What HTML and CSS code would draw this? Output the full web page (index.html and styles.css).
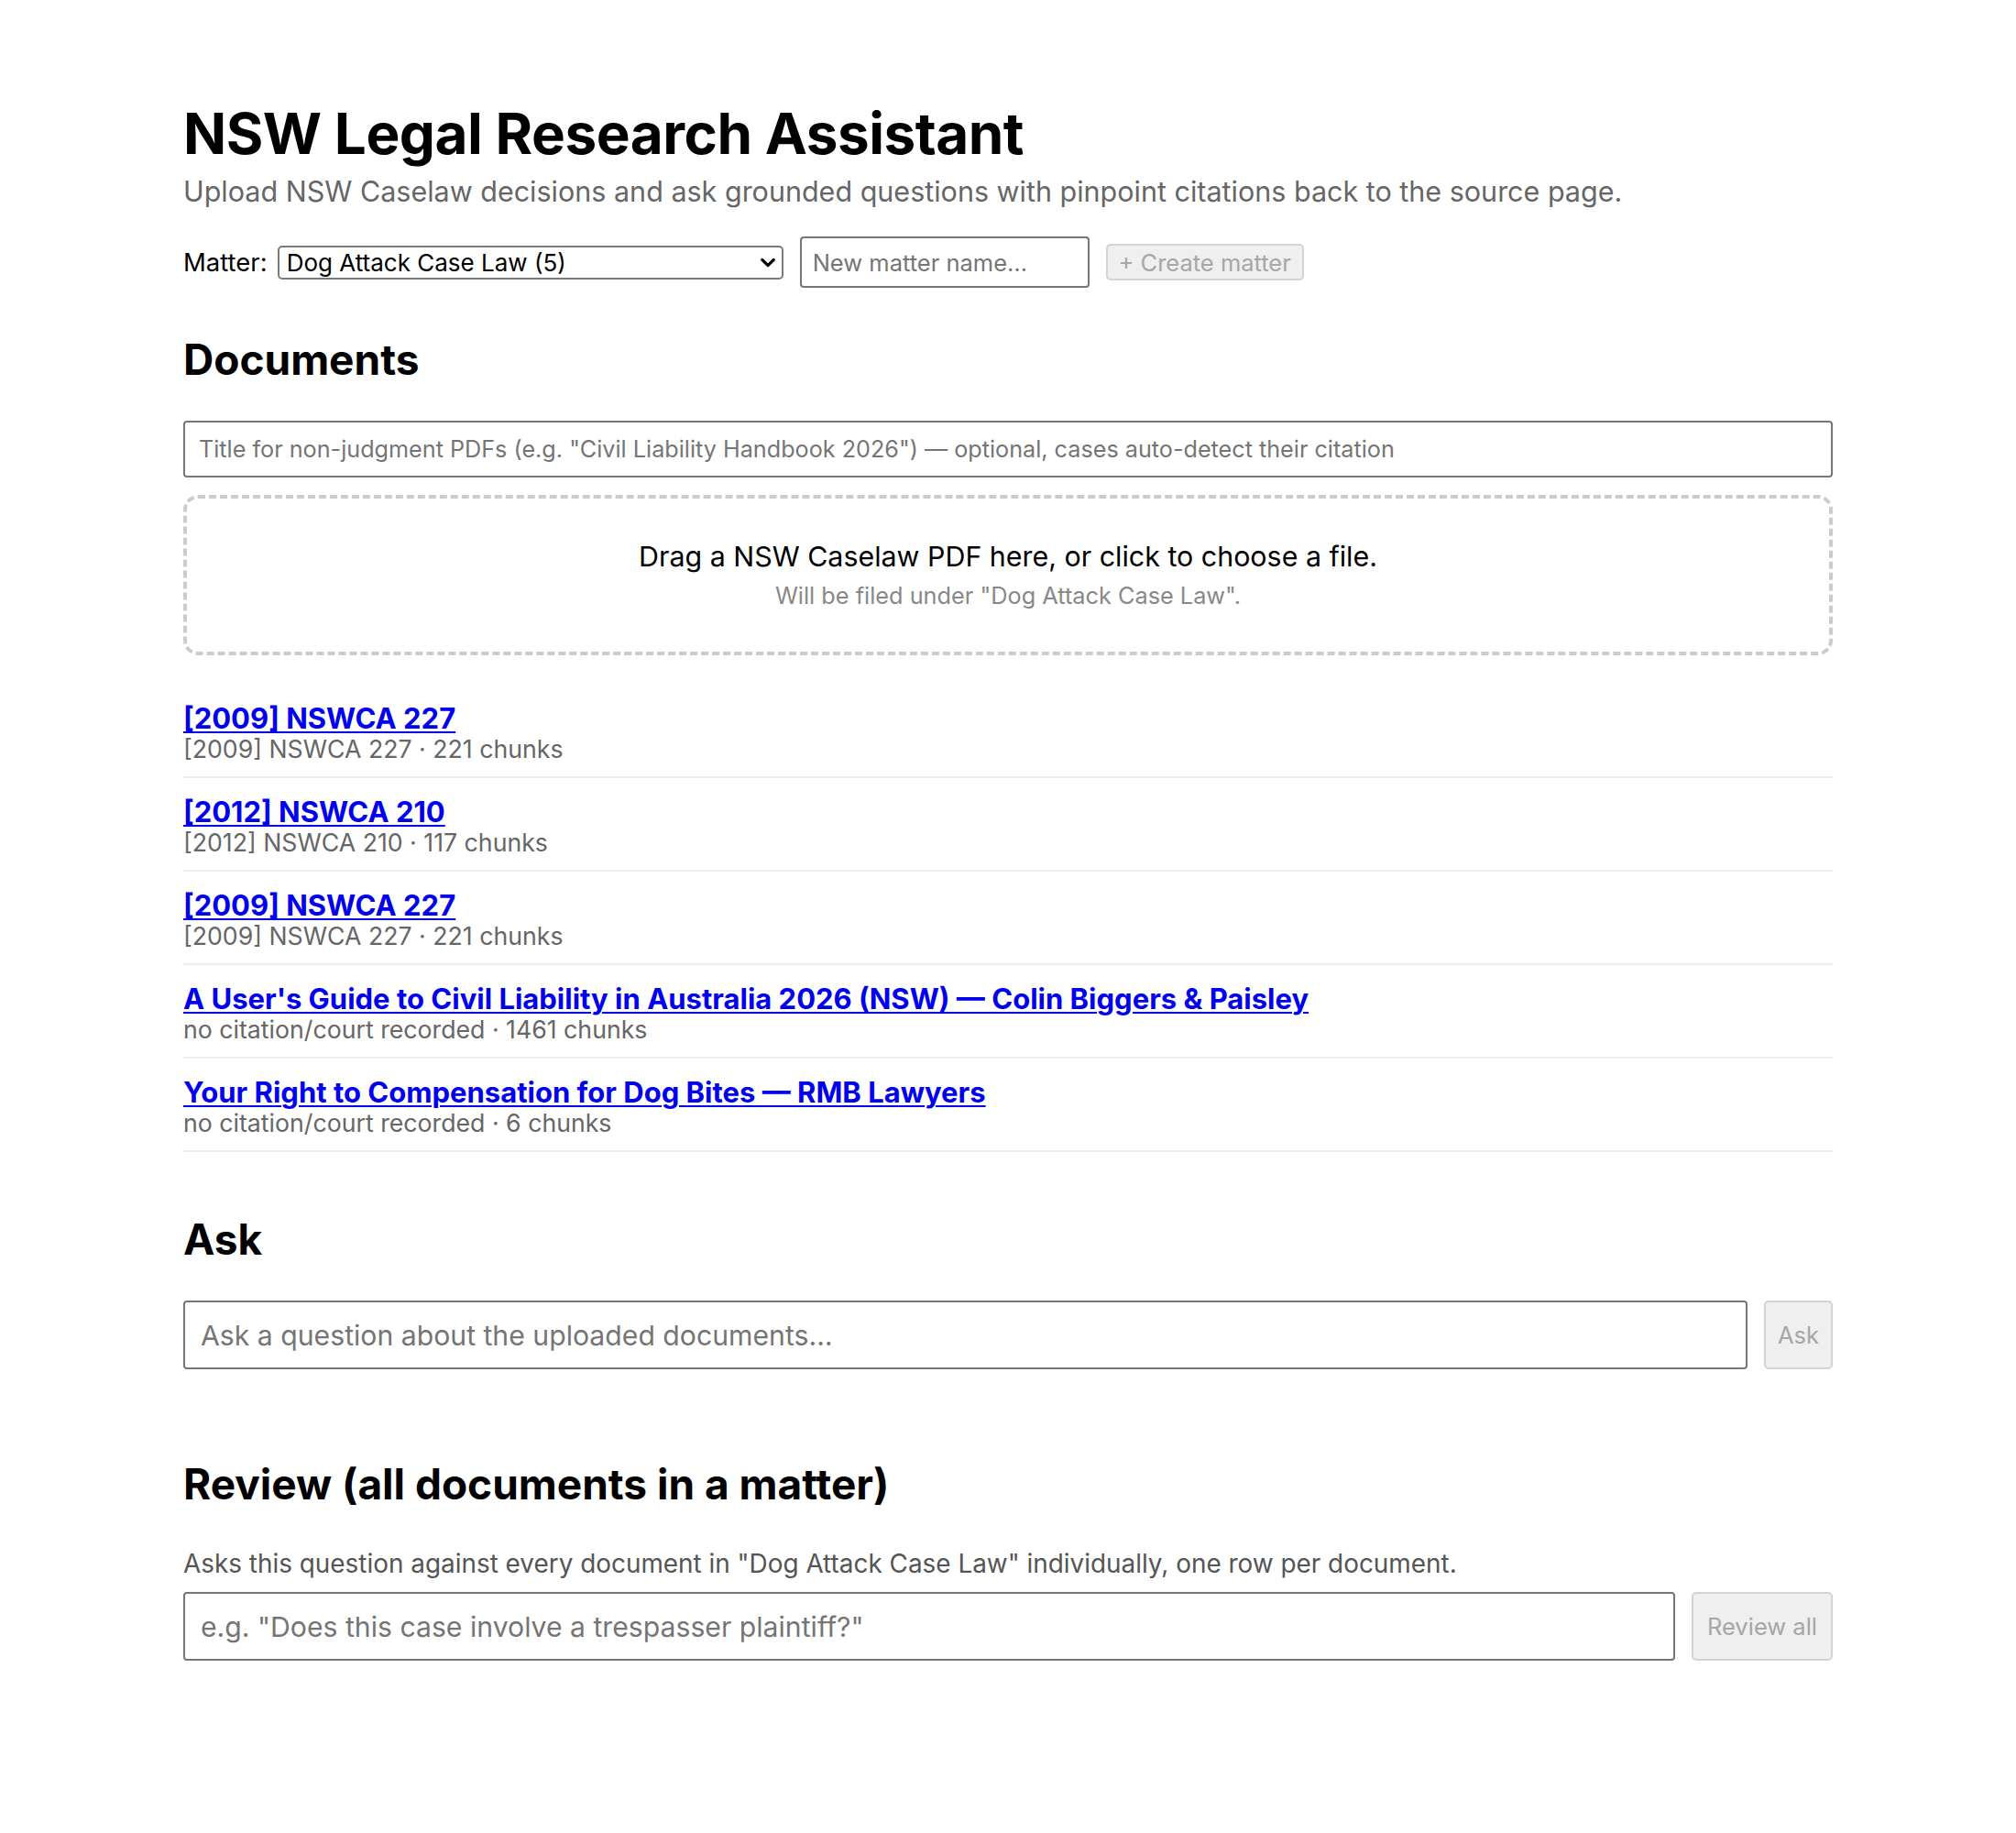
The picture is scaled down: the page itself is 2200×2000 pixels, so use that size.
FILE: index.html
```html
<!DOCTYPE html>
<html lang="en">
<head>
<meta charset="utf-8">
<title>NSW Legal Research Assistant</title>
<link rel="stylesheet" href="styles.css">
</head>
<body>
<main class="page">
  <h1 class="title">NSW Legal Research Assistant</h1>
  <p class="subtitle">Upload NSW Caselaw decisions and ask grounded questions with pinpoint citations back to the source page.</p>

  <div class="matter-row">
    <label class="matter-label" for="matter">Matter:</label>
    <span class="select-wrap">
      <select id="matter" class="matter-select">
        <option>Dog Attack Case Law (5)</option>
      </select>
      <svg class="chevron" viewBox="0 0 20 12" width="18" height="11" aria-hidden="true"><path d="M3 2.5 L10 9.5 L17 2.5" fill="none" stroke="#000" stroke-width="3.6" stroke-linecap="round" stroke-linejoin="round"/></svg>
    </span>
    <input class="new-matter" type="text" placeholder="New matter name…">
    <button class="btn btn-create" disabled>+ Create matter</button>
  </div>

  <h2 class="section-title docs-title">Documents</h2>
  <input class="title-input" type="text" placeholder="Title for non-judgment PDFs (e.g. &quot;Civil Liability Handbook 2026&quot;) — optional, cases auto-detect their citation">
  <div class="dropzone">
    <div class="drop-main">Drag a NSW Caselaw PDF here, or click to choose a file.</div>
    <div class="drop-sub">Will be filed under "Dog Attack Case Law".</div>
  </div>

  <ul class="doc-list">
    <li class="doc">
      <a class="doc-link" href="#">[2009] NSWCA 227</a>
      <div class="doc-meta">[2009] NSWCA 227 · 221 chunks</div>
    </li>
    <li class="doc">
      <a class="doc-link" href="#">[2012] NSWCA 210</a>
      <div class="doc-meta">[2012] NSWCA 210 · 117 chunks</div>
    </li>
    <li class="doc">
      <a class="doc-link" href="#">[2009] NSWCA 227</a>
      <div class="doc-meta">[2009] NSWCA 227 · 221 chunks</div>
    </li>
    <li class="doc">
      <a class="doc-link" href="#">A User's Guide to Civil Liability in Australia 2026 (NSW) — Colin Biggers &amp; Paisley</a>
      <div class="doc-meta">no citation/court recorded · 1461 chunks</div>
    </li>
    <li class="doc">
      <a class="doc-link" href="#">Your Right to Compensation for Dog Bites — RMB Lawyers</a>
      <div class="doc-meta">no citation/court recorded · 6 chunks</div>
    </li>
  </ul>

  <h2 class="section-title ask-title">Ask</h2>
  <div class="query-row ask-row">
    <input class="query-input" type="text" placeholder="Ask a question about the uploaded documents…">
    <button class="btn btn-query btn-ask" disabled>Ask</button>
  </div>

  <h2 class="section-title review-title">Review (all documents in a matter)</h2>
  <p class="review-desc">Asks this question against every document in "Dog Attack Case Law" individually, one row per document.</p>
  <div class="query-row review-row">
    <input class="query-input" type="text" placeholder="e.g. &quot;Does this case involve a trespasser plaintiff?&quot;">
    <button class="btn btn-query" disabled>Review all</button>
  </div>
</main>
</body>
</html>
```

FILE: styles.css
```css
* {
  box-sizing: border-box;
}

body {
  margin: 0;
  background: #fff;
  color: #000;
  font-family: Inter, "Noto Sans", "Liberation Sans", sans-serif;
}

.page {
  width: 1800px;
  margin: 0 auto;
  padding: 109px 0 120px;
}

.title {
  margin: 0;
  font-size: 62px;
  line-height: 74px;
  font-weight: 700;
  letter-spacing: -0.5px;
}

.subtitle {
  margin: 8px 0 0;
  font-size: 30.5px;
  line-height: 36px;
  color: #666;
}

/* Matter row */
.matter-row {
  display: flex;
  align-items: center;
  height: 56px;
  margin-top: 31px;
}

.matter-label {
  font-size: 27.5px;
  line-height: 30px;
  margin-right: 11px;
}

.select-wrap {
  position: relative;
  display: inline-flex;
  margin-right: 18px;
}

.matter-select {
  appearance: none;
  -webkit-appearance: none;
  width: 552px;
  height: 37px;
  padding: 0 40px 0 8px;
  border: 2px solid #7a7a7a;
  border-radius: 5px;
  background: #fff;
  color: #000;
  font-family: inherit;
  font-size: 26px;
}

.chevron {
  position: absolute;
  right: 8px;
  top: 13px;
  pointer-events: none;
}

.new-matter {
  width: 316px;
  height: 56px;
  margin-right: 18px;
  padding: 0 12px;
  border: 2px solid #767676;
  border-radius: 4px;
  font-family: inherit;
  font-size: 25.5px;
}

.new-matter::placeholder,
.title-input::placeholder,
.query-input::placeholder {
  color: #757575;
}

.btn {
  border: 2px solid #d3d3d3;
  border-radius: 5px;
  background: #efefef;
  color: #a6a6a6;
  font-family: inherit;
  font-size: 25.5px;
}

.btn-create {
  width: 216px;
  height: 40px;
  padding: 0;
}

/* Section titles */
.section-title {
  margin: 0;
  font-size: 46px;
  line-height: 55px;
  font-weight: 700;
}

.docs-title {
  margin-top: 51px;
}

.title-input {
  display: block;
  width: 100%;
  height: 62px;
  margin-top: 39px;
  padding: 0 15px;
  border: 2px solid #767676;
  border-radius: 4px;
  font-family: inherit;
  font-size: 25.2px;
}

.dropzone {
  height: 175px;
  margin-top: 19px;
  padding: 45px 0;
  border: 4px dashed #cccccc;
  border-radius: 16px;
  text-align: center;
}

.drop-main {
  font-size: 30.4px;
  line-height: 36px;
}

.drop-sub {
  margin-top: 10px;
  font-size: 25.3px;
  line-height: 30px;
  color: #888;
}

/* Documents list */
.doc-list {
  list-style: none;
  margin: 32px 0 0;
  padding: 0;
}

.doc {
  padding: 18px 0 16px;
  border-bottom: 2px solid #eeeeee;
}

.doc-link {
  display: inline-block;
  font-size: 31px;
  line-height: 38px;
  font-weight: 700;
  color: #0000ee;
  text-decoration-thickness: 2px;
  text-underline-offset: 3px;
}

.doc-meta {
  font-size: 26.7px;
  line-height: 28px;
  color: #666;
}

/* Ask / Review */
.ask-title {
  margin-top: 68px;
}

.query-row {
  display: flex;
  gap: 18px;
  height: 75px;
}

.ask-row {
  margin-top: 39px;
}

.query-input {
  flex: 1;
  height: 100%;
  padding: 0 17px;
  border: 2px solid #767676;
  border-radius: 4px;
  font-family: inherit;
  font-size: 30.2px;
}

.btn-query {
  padding: 0 15px;
  font-size: 25.5px;
}

.btn-ask {
  padding: 0 13px;
}

.review-title {
  margin-top: 98px;
}

.review-desc {
  margin: 43px 0 0;
  font-size: 27.9px;
  line-height: 32px;
  color: #555;
}

.review-row {
  margin-top: 15px;
}
```
